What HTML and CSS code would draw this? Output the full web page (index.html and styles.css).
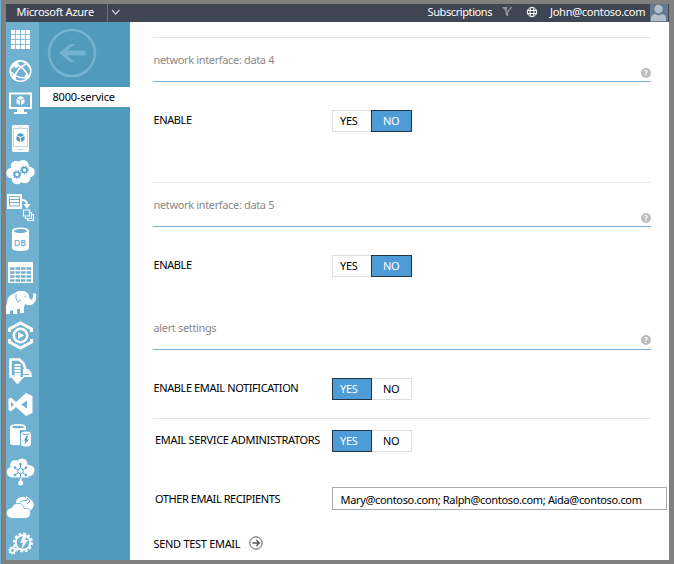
FILE: index.html
```
<!DOCTYPE html>
<html lang="en">
<head>
<meta charset="utf-8">
<title>Microsoft Azure</title>
<link rel="stylesheet" href="styles.css">
</head>
<body>
<div class="window">
  <header class="topbar">
    <span class="brand">Microsoft Azure</span>
    <svg class="chevron" width="17" height="18" viewBox="107 4 17 18"><path d="M107.500 4v18" stroke="#697080"/><path d="M112 10l3.700 4 3.700-4" fill="none" stroke="#c9cdd3" stroke-width="1.200"/></svg>
    <span class="subs">Subscriptions</span>
    <svg class="filter" width="12" height="18" viewBox="501 4 12 18"><path d="M502 7h5.500l-1 3 1 1v5l-2-1.500v-3.500z" fill="#8e929a"/><path d="M511.500 7l-4 5v4" fill="none" stroke="#8e929a" stroke-width="1.500"/></svg>
    <svg class="globe" width="12" height="18" viewBox="526 4 12 18"><g fill="none" stroke="#fff"><circle cx="532" cy="12" r="4.700"/><ellipse cx="532" cy="12" rx="2" ry="4.700"/><path d="M527.500 10.500h9M527.500 13.500h9"/></g></svg>
    <span class="user">John@contoso.com</span>
    <svg class="avatar" width="18" height="18" viewBox="650 4 18 18"><path fill="#647b92" d="M650 4h18v18h-18z"/><circle cx="658.500" cy="9" r="4.200" fill="#b4bec8"/><path d="M651 21v-3q0-3 4-4l3.500 1.500 3.500-1.500q4 1 4 4v3z" fill="#b4bec8"/></svg>
  </header>
  <div class="body">
    <nav class="rail">
      <svg width="33" height="33" viewBox="6 22 33 33"><path fill="#fff" d="M11 30h19v19h-19z"/><path d="M15.500 30v19M20.500 30v19M25.500 30v19M11 34.500h19M11 39.500h19M11 44.500h19" stroke="#70b0d1" stroke-width=".8"/></svg>
      <svg width="33" height="32" viewBox="6 55 33 32"><circle cx="20.500" cy="71" r="10.300" fill="none" stroke="#fff" stroke-width="1.600"/><g fill="none" stroke="#fff" stroke-width="1.600"><path d="M15 64q8 2 14 13M26 64q-9 4-12 14M11 72q8 8 18 5M20 61q-6 2-8 7"/></g><circle cx="16" cy="65" r="2.700" fill="#fff"/><circle cx="14" cy="77" r="2.200" fill="#fff"/><circle cx="27" cy="76.500" r="2.300" fill="#fff"/><path fill="#fff" d="M20 61q8 0 10 8l-4-5z"/></svg>
      <svg width="33" height="34" viewBox="6 87 33 34"><path fill="#fff" fill-rule="evenodd" d="M9 92.500h23v16.500h-23zM11 94.500v12.500h19v-12.500zM17 109h7v3h3v2h-13v-2h3z"/><path fill="#fff" d="M20.500 96l4 2-4 2-4-2zM16.500 99l3.500 1.700v4.300l-3.500-2zM24.500 99l-3.500 1.700v4.300l3.500-2z"/></svg>
      <svg width="33" height="35" viewBox="6 121 33 35"><rect x="12" y="125" width="17" height="27" rx="1.500" fill="#fff"/><path d="M13.500 128.500h14v18h-14zM18 127h5M18 149.500h5" fill="none" stroke="#a5cee3" stroke-width=".8"/><path fill="#4c9cc4" d="M20.500 133l4 2-4 2-4-2zM16.500 136l3.500 1.700v4.300l-3.500-2zM24.500 136l-3.500 1.700v4.300l3.500-2z"/></svg>
      <svg width="33" height="34" viewBox="6 156 33 34"><g fill="#fff"><circle cx="11.500" cy="173" r="5.300"/><circle cx="16" cy="166" r="5.200"/><circle cx="23" cy="166" r="6"/><circle cx="29.500" cy="172" r="5.300"/><circle cx="25" cy="178" r="5.300"/><circle cx="17" cy="179" r="5.300"/><path d="M13 167h14v12h-14z"/></g><g fill="none" stroke="#5ba4ca" stroke-width="1.600"><circle cx="17" cy="174.500" r="2.500"/><circle cx="24.500" cy="170" r="2.500"/></g><g fill="none" stroke="#5ba4ca" stroke-width="1.200" stroke-dasharray="1.300 1.300"><circle cx="17" cy="174.500" r="3.800"/><circle cx="24.500" cy="170" r="3.800"/></g></svg>
      <svg width="33" height="34" viewBox="6 190 33 34"><path fill="#fff" d="M7 194h15v15h-15z"/><path d="M9.500 196.500h10v9.500h-10zM9.500 199.500h10M9.500 202.500h10" fill="none" stroke="#70b0d1"/><g fill="none" stroke="#fff"><path d="M22 200q5 0 5 5" stroke-width="2"/><path d="M23.500 210h6v6h-6zM25.500 216.500v2h6v-6h-2M27.500 218.500v2h6v-6h-2" stroke-width="1.200"/></g><path fill="#fff" d="M23.500 204h7l-3.500 5z"/></svg>
      <svg width="33" height="34" viewBox="6 224 33 34"><path fill="#fff" d="M12 231q0-3.500 8.500-3.500t8.500 3.500v17q0 3-8.500 3t-8.500-3z"/><ellipse cx="20.500" cy="231" rx="6.500" ry="2" fill="#70b0d1"/><text class="db" x="13.700" y="245.500">DB</text></svg>
      <svg width="33" height="30" viewBox="6 258 33 30"><path fill="#fff" d="M8 262h25v21h-25z"/><path d="M10 268.500h21M10 272.500h21M10 276.500h21M10 280.500h21" stroke="#70b0d1" stroke-width="2.500" stroke-dasharray="4.500 1"/></svg>
      <svg width="33" height="30" viewBox="6 288 33 30"><path fill="#fff" d="M7 304q0-9 8-11 3-3 7-2 6 0 7 5 1 5 3 3 2-2 1-6l3 1q1 9-5 11-3 1-6-1l-1 3v6h-4v-4h-3v5h-4v-4l-3 1v3h-4v-6l-1-4-1 3z"/><path d="M16 294q-1 6 2 8l3-2M25 296v1" fill="none" stroke="#70b0d1"/></svg>
      <svg width="33" height="36" viewBox="6 318 33 36"><path fill="none" stroke="#fff" stroke-width="3" d="M9.500 332v-3l11-6 11 6v3M9.500 339v3l11 6 11-6v-3"/><circle cx="20.500" cy="335.500" r="6.700" fill="none" stroke="#fff" stroke-width="2.500"/><path fill="#fff" d="M18 331.700l6 3.800-6 3.800z"/></svg>
      <svg width="33" height="34" viewBox="6 354 33 34"><path fill="none" stroke="#fff" stroke-width="2.500" d="M14 376.500h-3.500v-17h9l4 4 2 6"/><path fill="#fff" d="M14.500 364h6v13h3.500l-6.500 7.500-6.500-7.500h3.500zM23 369h5q4 2 4 8h-9z"/><path d="M14.500 366.500h6M14.500 369.500h6M14.500 372.500h6M22 364v10.500h7" fill="none" stroke="#70b0d1" stroke-width=".9"/></svg>
      <svg width="33" height="34" viewBox="6 388 33 34"><path fill="#fff" fill-rule="evenodd" d="M26 393l6.500 3v17l-6.500 3-10-9-5 4.500-2.500-1.500v-11l2.500-1.500 5 4.500zM27 400.500l-6 4 6 4zM11 402v5l3-2.500z"/></svg>
      <svg width="33" height="32" viewBox="6 422 33 32"><path fill="#fff" d="M10 427q0-3 8-3t8 3v3h-6v15q-10 1-10-2z"/><ellipse cx="18" cy="427" rx="6" ry="1.300" fill="#70b0d1"/><path fill="#fff" d="M21 434q0-2.500 5-2.500t5 2.500v10q0 2.500-5 2.500t-5-2.500z"/><path d="M22.500 434q3.500 1.500 7 0" stroke="#70b0d1" fill="none"/><path fill="#4c9cc4" d="M26 436.500l2-1-1 4h2l-4.500 5 1-4h-1.500z"/></svg>
      <svg width="33" height="36" viewBox="6 454 33 36"><g fill="#fff"><circle cx="12" cy="472" r="5.300"/><circle cx="15" cy="465" r="4.800"/><circle cx="22" cy="464" r="5.500"/><circle cx="29" cy="470.500" r="5.500"/><path d="M12 466h17v11.500h-17zM20 473h1.500v9h-1.500z"/><circle cx="20.700" cy="483" r="2.500"/></g><g fill="none" stroke="#5ba4ca"><circle cx="20.500" cy="471" r="2.700"/><path d="M20.500 468v-4M18 470l-3-2M23 470l3-2M18 473l-3 2M23 473l3 2M20.500 474v4"/></g><g fill="#5ba4ca"><circle cx="20.500" cy="464" r="1.200"/><circle cx="15" cy="467.500" r="1.200"/><circle cx="26" cy="467.500" r="1.200"/><circle cx="15" cy="475" r="1.200"/><circle cx="26" cy="475" r="1.200"/></g></svg>
      <svg width="33" height="36" viewBox="6 490 33 36"><path fill="#fff" d="M16 503q0-5 5-6 3-1 5 1v-2l6 4.500q3 3 1 7-2 4-6 4-1-4-6-4-1-3-5-4.500z"/><path d="M20 502q3-2 7-1.500v-2.500l3 3-3 3" fill="none" stroke="#70b0d1"/><path fill="#fff" stroke="#70b0d1" stroke-width=".8" d="M12 518.500q-5.500-1-5.500-5.500t5.500-5.500q2-5 7-4 4 0 5 5 6.500-1 6.500 4.500t-6.500 5.500z"/></svg>
      <svg width="33" height="34" viewBox="6 526 33 34"><g fill="none" stroke="#fff"><circle cx="23" cy="542.500" r="7.300" stroke-width="2"/><circle cx="23" cy="542.500" r="9" stroke-width="2" stroke-dasharray="2.700 2"/><circle cx="12.500" cy="550.500" r="2.300" stroke-width="1.700"/><circle cx="12.500" cy="550.500" r="3.600" stroke-width="1.200" stroke-dasharray="1.400 1.400"/></g><path fill="#fff" d="M23 536l4-1-2 5h3l-7 10 2-7h-3z"/></svg>
    </nav>
    <aside class="side">
      <svg class="back" width="91" height="65" viewBox="39 22 91 65"><circle cx="72" cy="53" r="23" fill="none" stroke="#74b2cf" stroke-width="2.600"/><path fill="#74b2cf" d="M59 53l11-9h5l-8 6.500h18.500v5h-18.500l8 6.500h-5z"/></svg>
      <div class="service"><span>8000-service</span></div>
    </aside>
    <main class="content">
      <section class="net net-a">
        <h2><span>network interface: data 4</span><i class="help">?</i></h2>
        <div class="row"><span class="label l-enable">ENABLE</span><div class="toggle"><b>YES</b><b class="on">NO</b></div></div>
      </section>
      <section class="net net-b">
        <h2><span>network interface: data 5</span><i class="help">?</i></h2>
        <div class="row"><span class="label l-enable">ENABLE</span><div class="toggle"><b>YES</b><b class="on">NO</b></div></div>
      </section>
      <section class="alerts">
        <h2><span>alert settings</span><i class="help">?</i></h2>
        <div class="row r-notify"><span class="label l-notify">ENABLE EMAIL NOTIFICATION</span><div class="toggle"><b class="on">YES</b><b>NO</b></div></div>
        <div class="row r-admin"><span class="label l-admin">EMAIL SERVICE ADMINISTRATORS</span><div class="toggle"><b class="on">YES</b><b>NO</b></div></div>
        <div class="row r-other"><span class="label l-other">OTHER EMAIL RECIPIENTS</span><div class="field"><span>Mary@contoso.com; Ralph@contoso.com; Aida@contoso.com</span></div></div>
        <div class="row r-send"><span class="label l-send">SEND TEST EMAIL</span><svg class="go" width="14" height="14" viewBox="0 0 14 14"><g fill="none" stroke="#555"><circle cx="7" cy="7" r="6.200"/><path d="M3.500 7h6.500M7.300 4l3 3-3 3" stroke-width="1.300"/></g></svg></div>
      </section>
    </main>
  </div>
</div>
</body>
</html>
```
FILE: styles.css
```
* { box-sizing: border-box; }
body {
  margin: 0;
  height: 564px;
  overflow: hidden;
  background: #808080;
  border-left: 1px solid #70b0d1;
  font: 11px/16px "Noto Sans", "Open Sans", sans-serif;
  color: #000;
}
svg { display: block; flex: none; }
span { white-space: nowrap; }
.window { margin: 4px 5px 0; height: 556px; background: #fff; }
.topbar { display: flex; height: 18px; background: #3f4552; color: #fff; line-height: 15px; padding-left: 10.500px; }
.brand { width: 90.500px; letter-spacing: -.25px; }
.subs { width: 73.500px; margin-left: 303.500px; letter-spacing: -.4px; }
.globe { margin-left: 13px; }
.user { width: 100px; margin-left: 12px; letter-spacing: -.27px; }
.body { display: flex; height: 538px; }
.rail { width: 33px; background: #70b0d1; flex: none; }
.side { width: 91px; background: #509bbb; flex: none; }
.db { font: 600 9px "Open Sans", sans-serif; fill: #70b0d1; }
.service { height: 20px; margin-left: 1px; background: #fff; padding-left: 12.500px; line-height: 20px; letter-spacing: -.2px; }
.content { flex: 1; padding-left: 23px; }
.net { width: 498px; border-top: 1px solid #e6e6e6; }
.net-a { margin-top: 15px; height: 145px; }
.net-b { height: 122px; }
h2 {
  display: flex; justify-content: space-between;
  margin: 0; width: 498px; height: 44px; padding-top: 14px;
  border-bottom: 1px solid #7baedb;
  font-size: 11px; font-weight: 400; color: #8a8a8a; letter-spacing: -.35px;
}
h2 span { padding-left: .5px; }
.alerts h2 { padding-top: 16px; height: 46px; }
.help {
  width: 10px; height: 10px; margin-top: 15px; border-radius: 50%;
  background: #bcbcbc; color: #fff; font: bold 8px/10px "Noto Sans", sans-serif; text-align: center; letter-spacing: 0;
}
.net .help { margin-top: 16px; }
.row { display: flex; height: 22px; margin-top: 28px; }
.label { width: 179px; line-height: 20px; padding-left: .5px; letter-spacing: -.4px; }
.toggle { display: flex; width: 80px; height: 22px; border: 1px solid #ddd; line-height: 20px; letter-spacing: -.3px; }
.toggle b { width: 40px; margin: -1px 0 -1px -1px; height: 22px; padding: 1px 0 0 8px; font-weight: 400; flex: none; }
.toggle .on { padding: 0 0 0 7px; background: #4d9bd7; color: #fff; border: 1px solid #26343f; }
.toggle b + .on { width: 41px; padding-left: 11px; }
.toggle .on + b { margin-left: 0; padding-left: 11px; }
.r-notify { margin-top: 28px; }
.r-admin { width: 498px; height: 34px; margin-top: 18px; padding-top: 11px; border-top: 1px solid #e6e6e6; }
.l-admin { padding-left: 2px; letter-spacing: -.33px; }
.r-other { margin-top: 35px; height: 23px; }
.l-other { padding-left: 2px; line-height: 24px; letter-spacing: -.43px; }
.field { width: 335px; height: 23px; border: 1px solid #aaa; padding-left: 7.500px; line-height: 23px; letter-spacing: -.34px; }
.r-send { margin-top: 24px; height: 20px; }
.l-send { width: 96px; letter-spacing: -.3px; }
.go { margin-top: 2px; }
```
